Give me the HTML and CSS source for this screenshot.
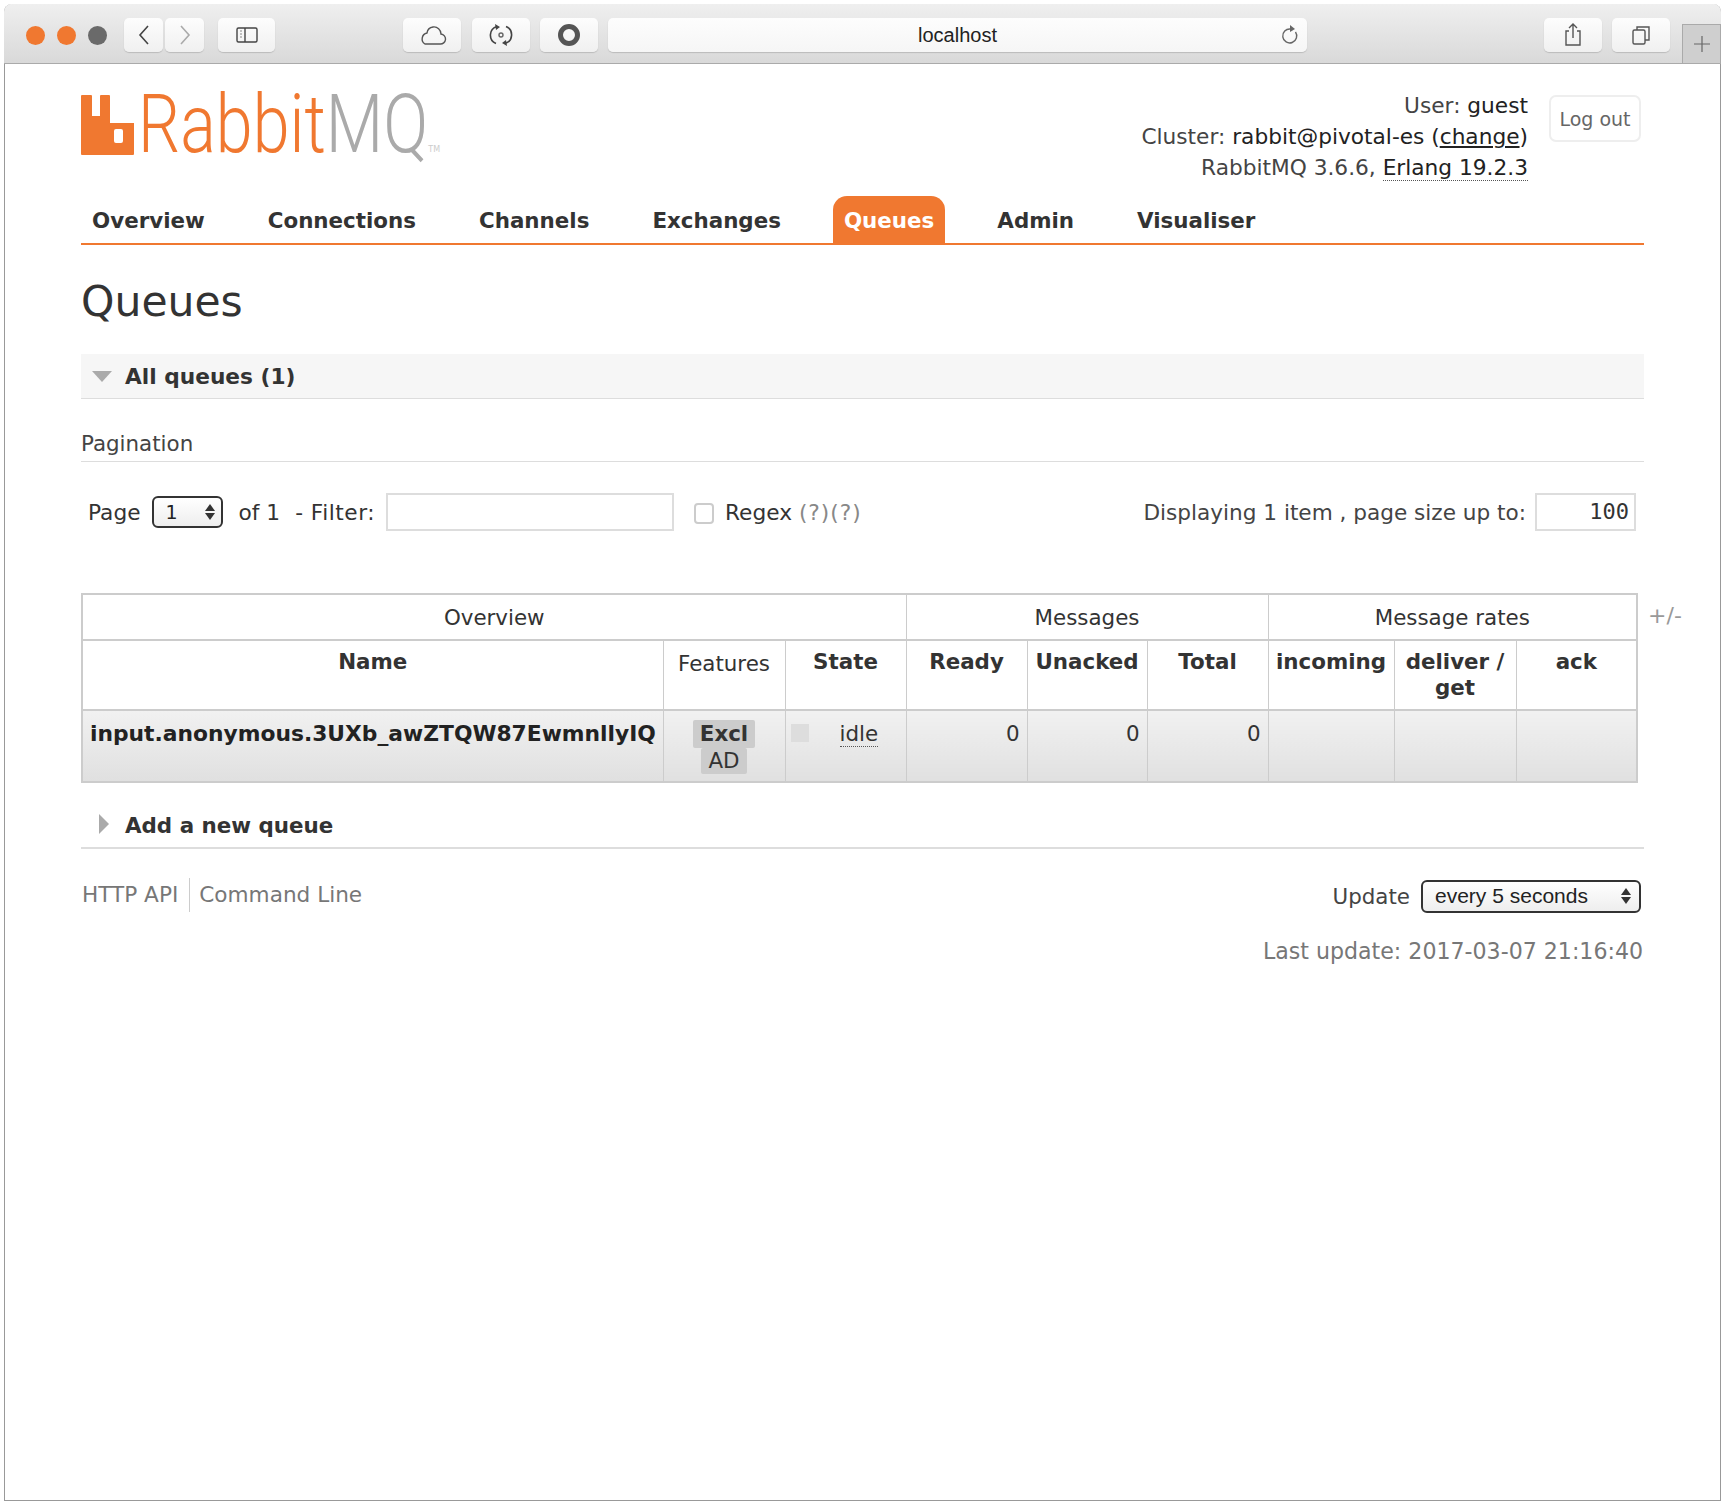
FILE: index.html
```html
<!DOCTYPE html>
<html lang="en">
<head>
  <meta charset="UTF-8" />
  <title>RabbitMQ Management</title>
  <link rel="stylesheet" href="styles.css">
</head>
<body>
  <div class="window">
    <div class="toolbar">
      <div class="lights">
        <span class="light orange"></span>
        <span class="light orange"></span>
        <span class="light grey"></span>
      </div>
      <div class="btn-pair">
        <div class="tool-btn nav-btn">
          <svg width="14" height="24" viewBox="0 0 14 24"><path d="M11 3 3 12l8 9" fill="none" stroke="#444" stroke-width="1.6"/></svg>
        </div>
        <div class="tool-btn nav-btn">
          <svg width="14" height="24" viewBox="0 0 14 24"><path d="M3 3l8 9-8 9" fill="none" stroke="#aaa" stroke-width="1.6"/></svg>
        </div>
      </div>
      <div class="tool-btn side-btn">
        <svg width="24" height="18" viewBox="0 0 24 18"><rect x="2" y="2" width="20" height="14" rx="1.5" fill="none" stroke="#444" stroke-width="1.4"/><path d="M10 2v14" stroke="#444" stroke-width="1.4"/><path d="M5 5h2M5 8h2M5 11h2" stroke="#888" stroke-width="1.2"/></svg>
      </div>
      <div class="tool-btn wide-btn cloud-btn">
        <svg width="30" height="22" viewBox="0 0 30 22"><path d="M8 20h15a5 5 0 0 0 1-10 7 7 0 0 0-8-7 7 7 0 0 0-6 6 6 6 0 0 0-2 11z" fill="none" stroke="#555" stroke-width="1.4"/></svg>
      </div>
      <div class="tool-btn wide-btn">
        <svg width="24" height="24" viewBox="0 0 24 24"><path d="M8 3.500a9 9 0 0 0-1 17M16 20.500a9 9 0 0 0 1-17" fill="none" stroke="#444" stroke-width="1.6"/><path d="M6 1l5 3-4 3zM18 23l-5-3 4-3z" fill="#444"/><circle cx="12" cy="12" r="2" fill="none" stroke="#666" stroke-width="1.4"/></svg>
      </div>
      <div class="tool-btn wide-btn">
        <svg width="24" height="24" viewBox="0 0 24 24"><circle cx="12" cy="12" r="8.500" fill="none" stroke="#555" stroke-width="5"/></svg>
      </div>
      <div class="address">
        <span class="address-text">localhost</span>
        <svg class="reload" width="20" height="22" viewBox="0 0 20 22"><path d="M15.500 8a7 7 0 1 1-5-3" fill="none" stroke="#666" stroke-width="1.4"/><path d="M10 1l5 4-5 3z" fill="#666"/></svg>
      </div>
      <div class="tool-btn wide-btn share-btn">
        <svg width="22" height="26" viewBox="0 0 22 26"><path d="M7 9H4v14h14V9h-3" fill="none" stroke="#555" stroke-width="1.4"/><path d="M11 16V2M7 6l4-4 4 4" fill="none" stroke="#555" stroke-width="1.4"/></svg>
      </div>
      <div class="tool-btn wide-btn">
        <svg width="22" height="22" viewBox="0 0 22 22"><rect x="3" y="6" width="12" height="14" rx="1.500" fill="none" stroke="#555" stroke-width="1.4"/><path d="M7 6V3h12v13h-4" fill="none" stroke="#555" stroke-width="1.4"/></svg>
      </div>
      <div class="new-tab">
        <svg width="20" height="20" viewBox="0 0 20 20"><path d="M10 2v16M2 10h16" stroke="#666" stroke-width="1.2"/></svg>
      </div>
    </div>

    <div class="page">
      <div class="header">
        <div class="logo">
          <svg class="logo-mark" width="53" height="60" viewBox="0 0 53 60"><path d="M0 1a1 1 0 0 1 1-1h9a1 1 0 0 1 1 1v20h8V1a1 1 0 0 1 1-1h8a1 1 0 0 1 1 1v27h24v31a1 1 0 0 1-1 1H1a1 1 0 0 1-1-1zM33 36v10a2 2 0 0 0 2 2h5a2 2 0 0 0 2-2V36a2 2 0 0 0-2-2h-5a2 2 0 0 0-2 2z" fill="#f07830" fill-rule="evenodd"/></svg>
          <span class="logo-text"><span class="logo-rabbit">Rabbit</span><span class="logo-mq">MQ</span></span>
          <span class="logo-tm">TM</span>
        </div>
        <div class="user-box">
          <div class="user-info">
            <div class="info-line"><span class="dim">User:</span> guest</div>
            <div class="info-line"><span class="dim">Cluster:</span> rabbit@pivotal-es (<a class="plain-link">change</a>)</div>
            <div class="info-line"><span class="dim">RabbitMQ 3.6.6,</span> <span class="dotted">Erlang 19.2.3</span></div>
          </div>
          <div class="logout">Log out</div>
        </div>
      </div>

      <ul class="tabs">
        <li class="tab">Overview</li>
        <li class="tab">Connections</li>
        <li class="tab">Channels</li>
        <li class="tab">Exchanges</li>
        <li class="tab active">Queues</li>
        <li class="tab">Admin</li>
        <li class="tab">Visualiser</li>
      </ul>

      <h1 class="title">Queues</h1>

      <div class="section-head open">
        <span class="arrow-down"></span>
        <span>All queues (1)</span>
      </div>

      <div class="pagination-label">Pagination</div>

      <div class="filter-row">
        <div class="filter-left">
          <span>Page</span>
          <div class="select-box page-select"><span>1</span><span class="updown"></span></div>
          <span class="of">of 1</span>
          <span class="dash">- Filter:</span>
          <div class="text-input filter-input"></div>
          <span class="check"></span>
          <span>Regex <span class="muted">(?)(?)</span></span>
        </div>
        <div class="filter-right">
          <span class="dim">Displaying 1 item , page size up to:</span>
          <div class="text-input size-input">100</div>
        </div>
      </div>

      <div class="table-wrap">
        <table class="queues">
          <colgroup>
            <col class="c-name"><col class="c-features"><col class="c-state">
            <col class="c-num"><col class="c-total"><col class="c-num">
            <col class="c-incoming"><col class="c-deliver"><col class="c-num">
          </colgroup>
          <thead>
            <tr class="group-row">
              <th colspan="3">Overview</th>
              <th colspan="3">Messages</th>
              <th colspan="3">Message rates</th>
            </tr>
            <tr class="head-row">
              <th class="bold">Name</th>
              <th class="features-head">Features</th>
              <th class="bold">State</th>
              <th class="bold">Ready</th>
              <th class="bold">Unacked</th>
              <th class="bold">Total</th>
              <th class="bold">incoming</th>
              <th class="bold">deliver / get</th>
              <th class="bold">ack</th>
            </tr>
          </thead>
          <tbody>
            <tr class="queue-row">
              <td class="queue-name">input.anonymous.3UXb_awZTQW87EwmnllyIQ</td>
              <td class="features">
                <span class="tag bold">Excl</span><br>
                <span class="tag">AD</span>
              </td>
              <td class="state"><span class="state-dot"></span><span class="dotted">idle</span></td>
              <td class="num">0</td>
              <td class="num">0</td>
              <td class="num">0</td>
              <td></td>
              <td></td>
              <td></td>
            </tr>
          </tbody>
        </table>
        <span class="plus-minus">+/-</span>
      </div>

      <div class="section-head closed">
        <span class="arrow-right"></span>
        <span>Add a new queue</span>
      </div>

      <div class="footer-row">
        <div class="footer-links">
          <span class="footer-link">HTTP API</span>
          <span class="footer-link">Command Line</span>
        </div>
        <div class="update">
          <span class="dim">Update</span>
          <div class="select-box update-select"><span>every 5 seconds</span><span class="updown"></span></div>
        </div>
      </div>
      <div class="last-update">Last update: 2017-03-07 21:16:40</div>
    </div>
  </div>
</body>
</html>
```

FILE: styles.css
```css
* { box-sizing: border-box; }
html, body { height: 100%; }
body {
  margin: 0;
  padding: 4px 4px 4px 4px;
  background: #fff;
  font-family: "DejaVu Sans", Verdana, sans-serif;
  font-size: 21.400px;
  color: #333;
}
.window {
  height: 100%;
  display: flex;
  flex-direction: column;
  border: 1px solid #999;
  border-top: 0;
  border-radius: 8px 8px 0 0;
}

/* browser chrome */
.toolbar {
  height: 60px;
  flex: none;
  margin: 0 -1px;
  display: flex;
  align-items: center;
  padding: 3px 0 0 22px;
  background: linear-gradient(#efefef, #d9d9d9);
  border-radius: 8px 8px 0 0;
  border-bottom: 1px solid #aaa;
}
.lights { display: flex; gap: 12px; margin-right: 17px; }
.light { width: 19px; height: 19px; border-radius: 50%; }
.light.orange { background: #f07830; }
.light.grey { background: #6a6a6a; }
.btn-pair { display: flex; gap: 2px; margin-right: 14px; }
.tool-btn {
  height: 34px;
  background: linear-gradient(#fdfdfd, #f0f0f0);
  border-radius: 5px;
  box-shadow: 0 1px 1px #bbb;
  display: flex;
  align-items: center;
  justify-content: center;
}
.nav-btn { width: 39px; }
.side-btn { width: 57px; margin-right: 128px; }
.wide-btn { width: 58px; margin-right: 10px; }
.cloud-btn { margin-right: 11px; }
.address {
  width: 699px;
  height: 34px;
  margin-right: 237px;
  background: linear-gradient(#fdfdfd, #f6f6f6);
  border-radius: 5px;
  box-shadow: 0 1px 1px #bbb;
  display: flex;
  align-items: center;
  justify-content: center;
  position: relative;
  font-family: "Liberation Sans", Arial, sans-serif;
  font-size: 20px;
  color: #222;
}
.reload { position: absolute; right: 7px; top: 6px; }
.share-btn { margin-right: 10px; }
.new-tab {
  width: 39px;
  height: 39px;
  margin-left: auto;
  align-self: flex-end;
  background: #cfcfcf;
  border: 1px solid #aaa;
  border-bottom: 0;
  display: flex;
  align-items: center;
  justify-content: center;
}

/* page */
.page { flex: 1; padding: 0 76px 0 76px; }
.header {
  display: flex;
  justify-content: space-between;
  height: 132px;
  padding-top: 31px;
}
.logo { display: flex; align-items: flex-start; height: 62px; }
.logo-mark { flex: none; }
.logo-text {
  font-family: Roboto, Lato, sans-serif;
  font-weight: 300;
  font-size: 82px;
  line-height: 58px;
  margin: 0 -70px 0 4px;
  display: inline-block;
  transform: scaleX(.81);
  transform-origin: left center;
}
.logo-rabbit { color: #f07830; }
.logo-mq { color: #aaa; }
.logo-tm { font-size: 8px; color: #ccc; align-self: flex-end; margin: 0 0 3px 2px; }
.user-box { display: flex; align-items: flex-start; padding-right: 3px; }
.user-info {
  text-align: right;
  font-size: 21.700px;
  line-height: 31px;
  color: #222;
  margin: -5px 0 0;
}
.dim { color: #444; }
.plain-link { text-decoration: underline; }
.dotted { border-bottom: 1px dotted #555; }
.logout {
  width: 92px;
  height: 47px;
  margin-left: 21px;
  border: 2px solid #eee;
  border-radius: 7px;
  color: #666;
  font-size: 19px;
  display: flex;
  align-items: center;
  justify-content: center;
}
.tabs {
  list-style: none;
  margin: 0;
  padding: 0;
  display: flex;
  gap: 41px;
  height: 49px;
  border-bottom: 2px solid #f07830;
}
.tab {
  padding: 3px 11px 0;
  font-size: 21.400px;
  font-weight: bold;
  line-height: 44px;
  color: #333;
}
.tab.active {
  background: #f07830;
  color: #fff;
  border-radius: 14px 14px 0 0;
}
.title {
  margin: 29px 0 0;
  font-size: 42.500px;
  line-height: 56px;
  font-weight: normal;
  color: #333;
}
.section-head {
  display: flex;
  align-items: center;
  font-weight: bold;
  color: #333;
  border-bottom: 1px solid #ddd;
}
.section-head.open {
  margin-top: 24px;
  height: 45px;
  background: #f6f6f6;
  padding-left: 11px;
  gap: 13px;
  font-size: 21.700px;
}
.arrow-down {
  width: 0;
  height: 0;
  border-left: 10px solid transparent;
  border-right: 10px solid transparent;
  border-top: 11px solid #aaa;
}
.arrow-right {
  width: 0;
  height: 0;
  margin-top: 2px;
  border-top: 10px solid transparent;
  border-bottom: 10px solid transparent;
  border-left: 10px solid #aaa;
}
.pagination-label {
  margin-top: 28px;
  height: 35px;
  line-height: 33px;
  color: #444;
  border-bottom: 1px solid #ddd;
}
.filter-row {
  display: flex;
  justify-content: space-between;
  align-items: center;
  margin-top: 32px;
  height: 36px;
  padding: 0 7px;
}
.filter-left { display: flex; align-items: center; font-size: 21.700px; }
.filter-right { display: flex; align-items: center; gap: 9px; font-size: 21.600px; padding-right: 1px; }
.select-box {
  border: 2px solid #333;
  border-radius: 6px;
  background: linear-gradient(#fff, #eee);
  display: flex;
  align-items: center;
  justify-content: space-between;
  font-size: 19px;
  color: #222;
}
.page-select { width: 71px; height: 32px; margin: 0 16px 0 11px; padding: 0 6px 0 12px; }
.updown {
  width: 10px;
  height: 18px;
  position: relative;
}
.updown::before, .updown::after {
  content: "";
  position: absolute;
  left: 0;
  border-left: 5px solid transparent;
  border-right: 5px solid transparent;
}
.updown::before { top: 1px; border-bottom: 7px solid #333; }
.updown::after { bottom: 1px; border-top: 7px solid #333; }
.of { margin-right: 15px; }
.dash { letter-spacing: .5px; }
.text-input { border: 2px solid #ddd; background: #fff; height: 38px; }
.filter-input { width: 288px; margin: 0 20px 0 11px; }
.check {
  width: 20px;
  height: 21px;
  border: 2px solid #ccc;
  border-radius: 4px;
  margin-right: 11px;
  margin-top: 3px;
}
.muted { color: #888; letter-spacing: 1px; }
.size-input {
  width: 101px;
  text-align: right;
  line-height: 34px;
  padding-right: 5px;
  font-family: "DejaVu Sans Mono", monospace;
  font-size: 22px;
}
.table-wrap { margin-top: 63px; display: flex; align-items: flex-start; }
.queues {
  width: 1555px;
  table-layout: fixed;
  border-collapse: collapse;
  border: 2px solid #ccc;
  color: #333;
}
.c-name { width: 581px; }
.c-features { width: 122px; }
.c-state { width: 121px; }
.c-num { width: 121px; }
.c-total { width: 120px; }
.c-incoming { width: 126px; }
.c-deliver { width: 122px; }
.queues th, .queues td { border: 1px solid #ccc; padding: 0; }
.queues th { font-weight: normal; }
.queues th.bold { font-weight: bold; }
.group-row th { height: 46px; border-bottom-width: 2px; }
.head-row th { height: 70px; vertical-align: top; padding: 8px 4px 0; line-height: 26px; border-bottom-width: 2px; }
.head-row .features-head { padding-top: 10px; }
.queue-row td {
  height: 72px;
  vertical-align: top;
  padding-top: 10px;
  line-height: 26px;
  background: linear-gradient(#f1f1f1, #e0e0e0);
}
.queue-name { font-weight: bold; font-size: 21.800px; padding-left: 7px !important; white-space: nowrap; color: #222; }
.features { text-align: center; padding-top: 9px !important; }
.tag { background: #ccc; padding: 0 7px; display: inline-block; border-radius: 2px; }
.tag.bold { font-weight: bold; padding: 1px 7px; }
.state { white-space: nowrap; }
.state-dot {
  display: inline-block;
  width: 18px;
  height: 18px;
  background: #ddd;
  margin: 0 31px 0 5px;
  vertical-align: -1px;
}
.num { text-align: right; padding-right: 7px !important; }
.plus-minus { margin: 10px 0 0 10px; color: #999; font-size: 22px; }
.section-head.closed {
  margin-top: 26px;
  height: 40px;
  padding: 3px 0 0 18px;
  gap: 16px;
  align-items: flex-start;
  border-bottom-width: 2px;
  line-height: 28px;
}
.footer-row {
  display: flex;
  justify-content: space-between;
  align-items: center;
  margin-top: 29px;
  height: 34px;
}
.footer-links { display: flex; color: #777; font-size: 21.600px; padding-left: 1px; }
.footer-link { padding-right: 11px; line-height: 34px; }
.footer-link + .footer-link { border-left: 1px solid #ccc; padding-left: 9px; }
.update { display: flex; align-items: center; gap: 11px; padding: 2px 3px 0 0; }
.update-select { width: 220px; height: 33px; padding: 0 8px 0 12px; font-family: "Liberation Sans", Arial, sans-serif; font-size: 21px; }
.last-update { text-align: right; margin-top: 26px; color: #777; padding-right: 1px; font-size: 22.100px; }
```
